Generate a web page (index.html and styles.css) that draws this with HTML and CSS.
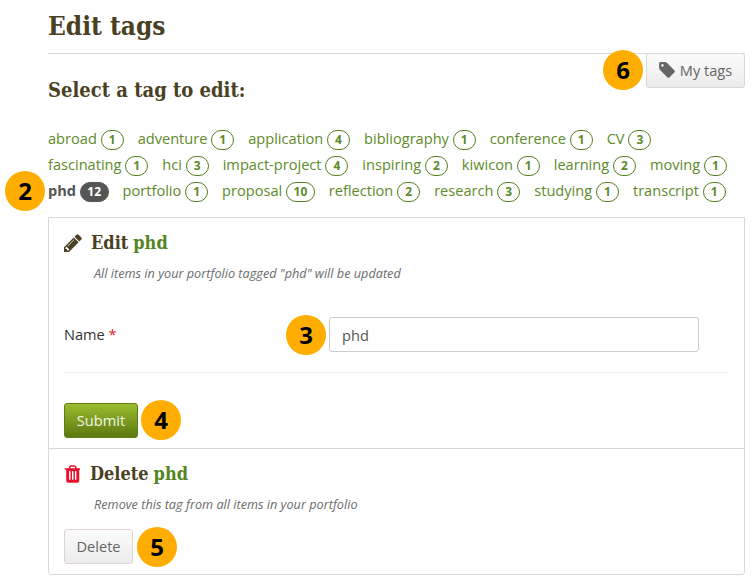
FILE: index.html
```html
<!DOCTYPE html>
<html lang="en">
<head>
    <meta charset="UTF-8">
    <title>Edit tags</title>
    <link rel="stylesheet" href="styles.css">
</head>
<body>

<div class="page">
    <h1>Edit tags</h1>

    <a class="btn btn-mytags" href="#">
        <svg class="icon-tag" viewBox="128 128 1515 1536"><path d="M576 448q0-53-37.500-90.500t-90.500-37.500-90.500 37.500-37.500 90.500 37.500 90.500 90.500 37.500 90.500-37.500 37.500-90.500zm1067 576q0 53-37 90l-491 492q-39 37-91 37-53 0-90-37l-715-716q-38-37-64.500-101t-26.500-117v-416q0-52 38-90t90-38h416q53 0 117 26.500t102 64.500l715 714q37 39 37 91z"/></svg>
        My tags
    </a>
    <span class="callout callout-6">6</span>

    <h2>Select a tag to edit:</h2>

    <div class="tags">
        <div class="tag-row">
            <a class="tag" href="#">abroad <span class="count">1</span></a>
            <a class="tag" href="#">adventure <span class="count">1</span></a>
            <a class="tag" href="#">application <span class="count">4</span></a>
            <a class="tag" href="#">bibliography <span class="count">1</span></a>
            <a class="tag" href="#">conference <span class="count">1</span></a>
            <a class="tag" href="#">CV <span class="count">3</span></a>
        </div>
        <div class="tag-row">
            <a class="tag" href="#">fascinating <span class="count">1</span></a>
            <a class="tag" href="#">hci <span class="count">3</span></a>
            <a class="tag" href="#">impact-project <span class="count">4</span></a>
            <a class="tag" href="#">inspiring <span class="count">2</span></a>
            <a class="tag" href="#">kiwicon <span class="count">1</span></a>
            <a class="tag" href="#">learning <span class="count">2</span></a>
            <a class="tag" href="#">moving <span class="count">1</span></a>
        </div>
        <div class="tag-row">
            <a class="tag selected" href="#">phd <span class="count">12</span></a>
            <a class="tag" href="#">portfolio <span class="count">1</span></a>
            <a class="tag" href="#">proposal <span class="count">10</span></a>
            <a class="tag" href="#">reflection <span class="count">2</span></a>
            <a class="tag" href="#">research <span class="count">3</span></a>
            <a class="tag" href="#">studying <span class="count">1</span></a>
            <a class="tag" href="#">transcript <span class="count">1</span></a>
        </div>
    </div>
    <span class="callout callout-2">2</span>

    <div class="panel">
        <section class="edit-section">
            <h3>
                <svg class="icon-pencil" viewBox="128 128 1536 1536"><path d="M491 1536l91-91-235-235-91 91v107h128v128h107zm523-928q0-22-22-22-10 0-17 7l-542 542q-7 7-7 17 0 22 22 22 10 0 17-7l542-542q7-7 7-17zm-54-192l416 416-832 832h-416v-416zm683 96q0 53-37 90l-166 166-416-416 166-165q36-38 90-38 53 0 91 38l235 234q37 39 37 91z"/></svg>
                Edit <span class="tag-name">phd</span>
            </h3>
            <p class="desc">All items in your portfolio tagged "phd" will be updated</p>

            <div class="form-row">
                <label for="name">Name <span class="required">*</span></label>
                <input type="text" id="name" value="phd">
                <span class="callout callout-3">3</span>
            </div>

            <div class="submit-row">
                <button class="btn btn-submit">Submit</button>
                <span class="callout callout-4">4</span>
            </div>
        </section>

        <section class="delete-section">
            <h3>
                <svg class="icon-trash" viewBox="128 128 1408 1536"><path d="M704 1376v-704q0-14-9-23t-23-9h-64q-14 0-23 9t-9 23v704q0 14 9 23t23 9h64q14 0 23-9t9-23zm256 0v-704q0-14-9-23t-23-9h-64q-14 0-23 9t-9 23v704q0 14 9 23t23 9h64q14 0 23-9t9-23zm256 0v-704q0-14-9-23t-23-9h-64q-14 0-23 9t-9 23v704q0 14 9 23t23 9h64q14 0 23-9t9-23zm-544-992h448l-48-117q-7-9-17-11h-317q-10 2-17 11zm928 32v64q0 14-9 23t-23 9h-96v948q0 83-47 143.500t-113 60.500h-832q-66 0-113-58.500t-47-141.500v-952h-96q-14 0-23-9t-9-23v-64q0-14 9-23t23-9h309l70-167q15-37 54-63t79-26h320q40 0 79 26t54 63l70 167h309q14 0 23 9t9 23z"/></svg>
                Delete <span class="tag-name">phd</span>
            </h3>
            <p class="desc">Remove this tag from all items in your portfolio</p>
            <div class="delete-row">
                <button class="btn btn-delete">Delete</button>
                <span class="callout callout-5">5</span>
            </div>
        </section>
    </div>
</div>

</body>
</html>
```

FILE: styles.css
```css
body {
    font-family: "Open Sans", sans-serif;
    font-size: 14.6px;
    color: #333;
    margin: 0;
    background-color: #fff;
    overflow: hidden;
}

.page {
    position: relative;
    margin-left: 48px;
    width: 697px;
}

h1, h2, h3 {
    font-family: "DejaVu Serif Condensed", "DejaVu Serif", serif;
    color: #4a4022;
    margin: 0;
}

h1 {
    font-size: 26px;
    line-height: 52px;
    height: 54px;
    border-bottom: 1px solid #d9d9d9;
    box-sizing: border-box;
}

h2 {
    font-size: 20px;
    line-height: 24px;
    margin-top: 24px;
}

h3 {
    font-size: 18px;
    line-height: 24px;
    display: flex;
    align-items: center;
    gap: 5px;
}

.tag-name {
    color: #55851f;
}

.tags {
    margin-top: 24px;
}

.tag-row {
    display: flex;
    height: 26px;
    align-items: center;
    gap: 14px;
}

.tag {
    color: #5e8a2b;
    text-decoration: none;
    white-space: nowrap;
}

.count {
    display: inline-block;
    min-width: 8px;
    height: 18px;
    line-height: 17px;
    padding: 0 6.500px;
    border: 1px solid #55801f;
    border-radius: 10px;
    font-size: 12px;
    font-weight: bold;
    text-align: center;
    box-sizing: content-box;
}

.tag.selected {
    color: #555;
    font-weight: bold;
}

.tag.selected .count {
    background-color: #555;
    border-color: #555;
    color: #fff;
}

.panel {
    margin-top: 13px;
    border: 1px solid #d9d9d9;
    border-radius: 0 0 3px 3px;
    height: 358px;
    box-sizing: border-box;
}

.edit-section {
    height: 231px;
    padding: 13px 15px 0;
    border-bottom: 1px solid #d9d9d9;
    box-sizing: border-box;
}

.delete-section {
    padding: 13px 15px 0;
}

.desc {
    font-size: 12.700px;
    font-style: italic;
    color: #6b6b6b;
    margin: 10px 0 0 30px;
    line-height: 16px;
}

.form-row {
    position: relative;
    display: flex;
    align-items: center;
    margin-top: 36px;
    padding-bottom: 20px;
    border-bottom: 1px solid #ececec;
}

label {
    width: 265px;
    margin-bottom: 2px;
    color: #333;
}

.required {
    color: #e0202a;
}

input {
    width: 370px;
    height: 35px;
    box-sizing: border-box;
    padding: 0 12px;
    font-family: inherit;
    font-size: 14.6px;
    color: #555;
    border: 1px solid #ccc;
    border-radius: 3px;
}

.submit-row, .delete-row {
    position: relative;
}

.submit-row {
    margin-top: 30px;
}

.delete-row {
    margin-top: 17px;
}

.btn {
    display: inline-block;
    height: 35px;
    box-sizing: border-box;
    padding-bottom: 2px;
    font-family: inherit;
    font-size: 14.6px;
    border-radius: 3px;
    cursor: pointer;
}

.btn-submit {
    width: 74px;
    color: #f2f6e6;
    background: linear-gradient(#9abc2f, #5b7a10);
    border: 1px solid #5f7d14;
}

.btn-delete {
    width: 69px;
    color: #666;
    background: linear-gradient(#fbfbfb, #ececec);
    border: 1px solid #e0d4d6;
}

.btn-mytags {
    position: absolute;
    top: 53px;
    right: 0;
    width: 99px;
    display: flex;
    align-items: center;
    justify-content: center;
    gap: 5px;
    color: #666;
    text-decoration: none;
    background: linear-gradient(#fbfbfb, #ececec);
    border: 1px solid #d9d9d9;
}

.icon-tag {
    width: 16px;
    height: 16px;
    fill: #666;
}

.icon-pencil {
    width: 18px;
    height: 18px;
    fill: #4a4022;
    margin-right: 4px;
}

.icon-trash {
    width: 16px;
    height: 18px;
    fill: #e8112d;
    margin-right: 5px;
}

/* numbered markers laid over the screenshot */
.callout {
    position: absolute;
    width: 40px;
    height: 40px;
    line-height: 40px;
    border-radius: 50%;
    background-color: #ffad00;
    color: #000;
    font-size: 24px;
    font-weight: bold;
    text-align: center;
}

.callout-6 { top: 50px; left: 555px; }
.callout-2 { top: 171px; left: -43px; }
.callout-3 { top: -2px; left: 222px; }
.callout-4 { top: -3px; left: 77px; }
.callout-5 { top: -2px; left: 73px; }
```
